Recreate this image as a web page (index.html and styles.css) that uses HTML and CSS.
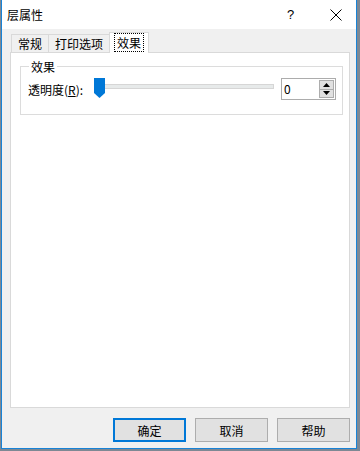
FILE: index.html
```html
<!DOCTYPE html>
<html lang="zh-CN">
<head>
    <meta charset="UTF-8">
    <title>层属性</title>
    <link rel="stylesheet" href="styles.css">
</head>
<body>
    <div class="window">
        <div class="titlebar">
            <span class="title">层属性</span>
            <span class="title-btn help">?</span>
            <span class="title-btn close">
                <svg width="12" height="12" viewBox="0 0 12 12"><path d="M0.5 0.5 L11.5 11.5 M11.5 0.5 L0.5 11.5" stroke="#000" stroke-width="1" fill="none"/></svg>
            </span>
        </div>

        <div class="dialog-body">
            <div class="tabs">
                <div class="tab">常规</div>
                <div class="tab">打印选项</div>
                <div class="tab active"><span class="focus">效果</span></div>
            </div>

            <div class="tab-panel">
                <fieldset class="group">
                    <legend>效果</legend>
                    <div class="row">
                        <label class="field-label">透明度(<u>R</u>):</label>
                        <div class="slider">
                            <div class="track"></div>
                            <svg class="thumb" width="11" height="20" viewBox="0 0 11 20"><path d="M0 0 H11 V15 L5.5 20 L0 15 Z" fill="#0078d7"/></svg>
                        </div>
                        <div class="spin">
                            <div class="spin-value">0</div>
                            <div class="spin-btns">
                                <div class="spin-btn"><svg width="7" height="4" viewBox="0 0 7 4"><path d="M3.5 0 L7 4 H0 Z" fill="#000"/></svg></div>
                                <div class="spin-btn"><svg width="7" height="4" viewBox="0 0 7 4"><path d="M0 0 H7 L3.5 4 Z" fill="#000"/></svg></div>
                            </div>
                        </div>
                    </div>
                </fieldset>
            </div>

            <div class="buttons">
                <button class="btn default">确定</button>
                <button class="btn">取消</button>
                <button class="btn">帮助</button>
            </div>
        </div>
    </div>
</body>
</html>
```

FILE: styles.css
```css
* {
    box-sizing: border-box;
}

body {
    margin: 0;
    padding: 0;
    background-color: #7d8894;
    font-family: "Noto Sans CJK SC", "Liberation Sans", sans-serif;
    font-size: 12px;
    color: #000;
}

.window {
    margin-left: 1px;
    width: 356px;
    height: 449px;
    border: 1px solid #1883d7;
    border-top: none;
    background-color: #f0f0f0;
    display: flex;
    flex-direction: column;
}

.titlebar {
    height: 29px;
    background-color: #fff;
    display: flex;
    align-items: center;
    position: relative;
}

.title {
    margin-left: 5px;
    font-size: 12px;
}

.title-btn {
    position: absolute;
    top: 0;
    height: 29px;
    display: flex;
    align-items: center;
}

.help {
    left: 285px;
    font-family: "Liberation Sans", sans-serif;
    font-size: 13px;
}

.close {
    left: 328px;
}

.dialog-body {
    flex: 1;
    display: flex;
    flex-direction: column;
    padding: 3px 6px 0 8px;
}

.tabs {
    display: flex;
    align-items: flex-end;
    height: 20px;
    margin-left: 1px;
}

.tab {
    height: 18px;
    line-height: 17px;
    padding: 0 6px;
    border: 1px solid #d9d9d9;
    border-bottom: none;
    margin-right: -1px;
    background-color: #f0f0f0;
}

.tab.active {
    height: 21px;
    line-height: 19px;
    background-color: #fff;
    position: relative;
    z-index: 1;
    margin-bottom: -1px;
    padding: 0 4px;
}

.focus {
    border: 1px dotted #000;
    padding: 0 2px;
}

.tab-panel {
    height: 356px;
    background-color: #fff;
    border: 1px solid #d9d9d9;
    padding: 5px 8px 0 9px;
}

.group {
    margin: 0;
    border: 1px solid #dcdcdc;
    padding: 0 6px 0 7px;
    height: 57px;
}

.group legend {
    padding: 0 2px;
    margin-left: 1px;
    line-height: 17px;
}

.row {
    display: flex;
    align-items: center;
    height: 28px;
}

.field-label {
    width: 66px;
}

.slider {
    position: relative;
    width: 180px;
    height: 22px;
}

.track {
    position: absolute;
    left: 6px;
    right: 0;
    top: 6px;
    height: 5px;
    background-color: #e7eaea;
    border: 1px solid #d6d6d6;
}

.thumb {
    position: absolute;
    left: 0;
    top: 0;
}

.spin {
    margin-left: 7px;
    width: 55px;
    height: 22px;
    border: 1px solid #acacac;
    background-color: #fff;
    display: flex;
}

.spin-value {
    flex: 1;
    padding-left: 2px;
    line-height: 20px;
}

.spin-btns {
    width: 16px;
    display: flex;
    flex-direction: column;
    padding: 1px 1px 1px 0;
}

.spin-btn {
    flex: 1;
    background-color: #e1e1e1;
    border: 1px solid #adadad;
    display: flex;
    align-items: center;
    justify-content: center;
}

.spin-btn + .spin-btn {
    border-top: none;
}

.buttons {
    display: flex;
    justify-content: flex-end;
    gap: 9px;
    margin-top: 10px;
}

.btn {
    width: 73px;
    height: 24px;
    background-color: #e1e1e1;
    border: 1px solid #adadad;
    font-family: "Noto Sans CJK SC", "Liberation Sans", sans-serif;
    font-size: 12px;
    padding: 0;
}

.btn.default {
    border: 2px solid #0078d7;
}
```
